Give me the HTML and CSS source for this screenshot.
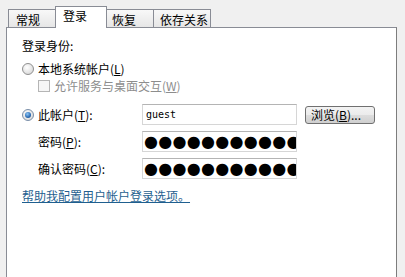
FILE: index.html
```html
<!DOCTYPE html>
<html lang="zh-CN">
<head>
<meta charset="utf-8">
<title>登录</title>
<link rel="stylesheet" href="styles.css">
</head>
<body>
<div class="window">
  <div class="tabs">
    <div class="tab t1">常规</div>
    <div class="tab active t2">登录</div>
    <div class="tab t3">恢复</div>
    <div class="tab t4">依存关系</div>
  </div>
  <div class="panel">
    <div class="heading">登录身份:</div>
    <div class="option first"><span class="radio"></span><span>本地系统帐户(<u>L</u>)</span></div>
    <div class="check"><span class="box"></span><span>允许服务与桌面交互(<u>W</u>)</span></div>
    <div class="form">
      <div class="option"><span class="radio on"><span class="dot"></span></span><span>此帐户(<u>T</u>):</span></div>
      <div class="field">guest</div>
      <button class="btn">浏览(<u>B</u>)...</button>
      <div class="lbl">密码(<u>P</u>):</div>
      <div class="field pwd">●●●●●●●●●●●●●●</div>
      <div></div>
      <div class="lbl">确认密码(<u>C</u>):</div>
      <div class="field pwd">●●●●●●●●●●●●●●</div>
      <div></div>
    </div>
    <a class="link" href="#">帮助我配置用户帐户登录选项。</a>
  </div>
</div>
</body>
</html>
```

FILE: styles.css
```css
html, body {
  margin: 0;
  padding: 0;
  background: #f0f0f0;
  overflow: hidden;
}
body {
  font-family: "Noto Sans CJK SC", "DejaVu Sans", sans-serif;
  font-size: 12px;
  line-height: 16px;
  color: #000;
}
.window {
  padding-left: 6px;
  padding-right: 8px;
}
.tabs {
  display: flex;
  align-items: flex-end;
  height: 27px;
  padding-left: 2px;
}
.tab {
  box-sizing: border-box;
  height: 18px;
  padding-top: 2px;
  padding-left: 6px;
  border: 1px solid #898c95;
  border-bottom: none;
  background: linear-gradient(#f8f8f8, #e6e6e6);
  margin-left: -1px;
  white-space: nowrap;
}
.t1 { width: 48px; margin-left: 0; padding-left: 7px; }
.t2 { width: 52px; padding-left: 7px; }
.t3 { width: 48px; padding-left: 5px; }
.t4 { width: 58px; }
.tab.active {
  position: relative;
  z-index: 1;
  height: 22px;
  padding-top: 1px;
  margin-bottom: -1px;
  background: #fff;
}
.panel {
  border: 1px solid #898c95;
  border-right-color: #7d7d7d;
  background: #fff;
  height: 260px;
  padding-left: 15px;
  padding-top: 10px;
  box-sizing: border-box;
}
.heading {
  height: 16px;
}
.option {
  display: flex;
  align-items: center;
  gap: 4px;
  height: 16px;
}
.option.first {
  margin-top: 7px;
}
.radio {
  box-sizing: border-box;
  width: 12px;
  height: 12px;
  border-radius: 50%;
  border: 1px solid #8f8f8f;
  background: radial-gradient(circle at 40% 35%, #ffffff, #dcdcdc 75%);
  display: flex;
  align-items: center;
  justify-content: center;
}
.radio.on {
  border-color: #7a8ea8;
}
.dot {
  width: 6px;
  height: 6px;
  border-radius: 50%;
  background: radial-gradient(circle at 40% 35%, #8ec6f5, #2a6bb4 60%, #173f70);
}
.check {
  display: flex;
  align-items: center;
  gap: 4px;
  height: 16px;
  margin-top: 1px;
  padding-left: 16px;
  color: #8d8d8d;
}
.box {
  box-sizing: border-box;
  width: 12px;
  height: 12px;
  border: 1px solid #b5b5b5;
  background: #f6f6f6;
}
.form {
  display: grid;
  grid-template-columns: 112px 155px 70px;
  grid-auto-rows: 21px;
  column-gap: 8px;
  row-gap: 6px;
  align-items: center;
  margin-top: 10px;
}
.lbl {
  padding-left: 16px;
}
.field {
  box-sizing: border-box;
  height: 21px;
  border: 1px solid #d6d6d6;
  border-top-color: #b4b4b4;
  background: #fff;
  font-family: "DejaVu Sans Mono", monospace;
  font-size: 10px;
  line-height: 19px;
  padding-left: 3px;
  overflow: hidden;
  white-space: nowrap;
}
.field.pwd {
  font-family: "DejaVu Sans", sans-serif;
  font-size: 16px;
  line-height: 19px;
  padding-left: 1px;
  letter-spacing: 0.3px;
}
.btn {
  box-sizing: border-box;
  height: 18px;
  width: 70px;
  padding: 0 0 0 5px;
  text-align: left;
  font-family: inherit;
  font-size: 12px;
  line-height: 16px;
  color: #000;
  border: 1px solid #707070;
  border-radius: 3px;
  background: linear-gradient(#f3f3f3, #ebebeb 50%, #dddddd 50%, #cfcfcf);
}
.link {
  display: block;
  width: max-content;
  margin-top: 9px;
  color: #1f5f8f;
  text-decoration: underline;
}
```
